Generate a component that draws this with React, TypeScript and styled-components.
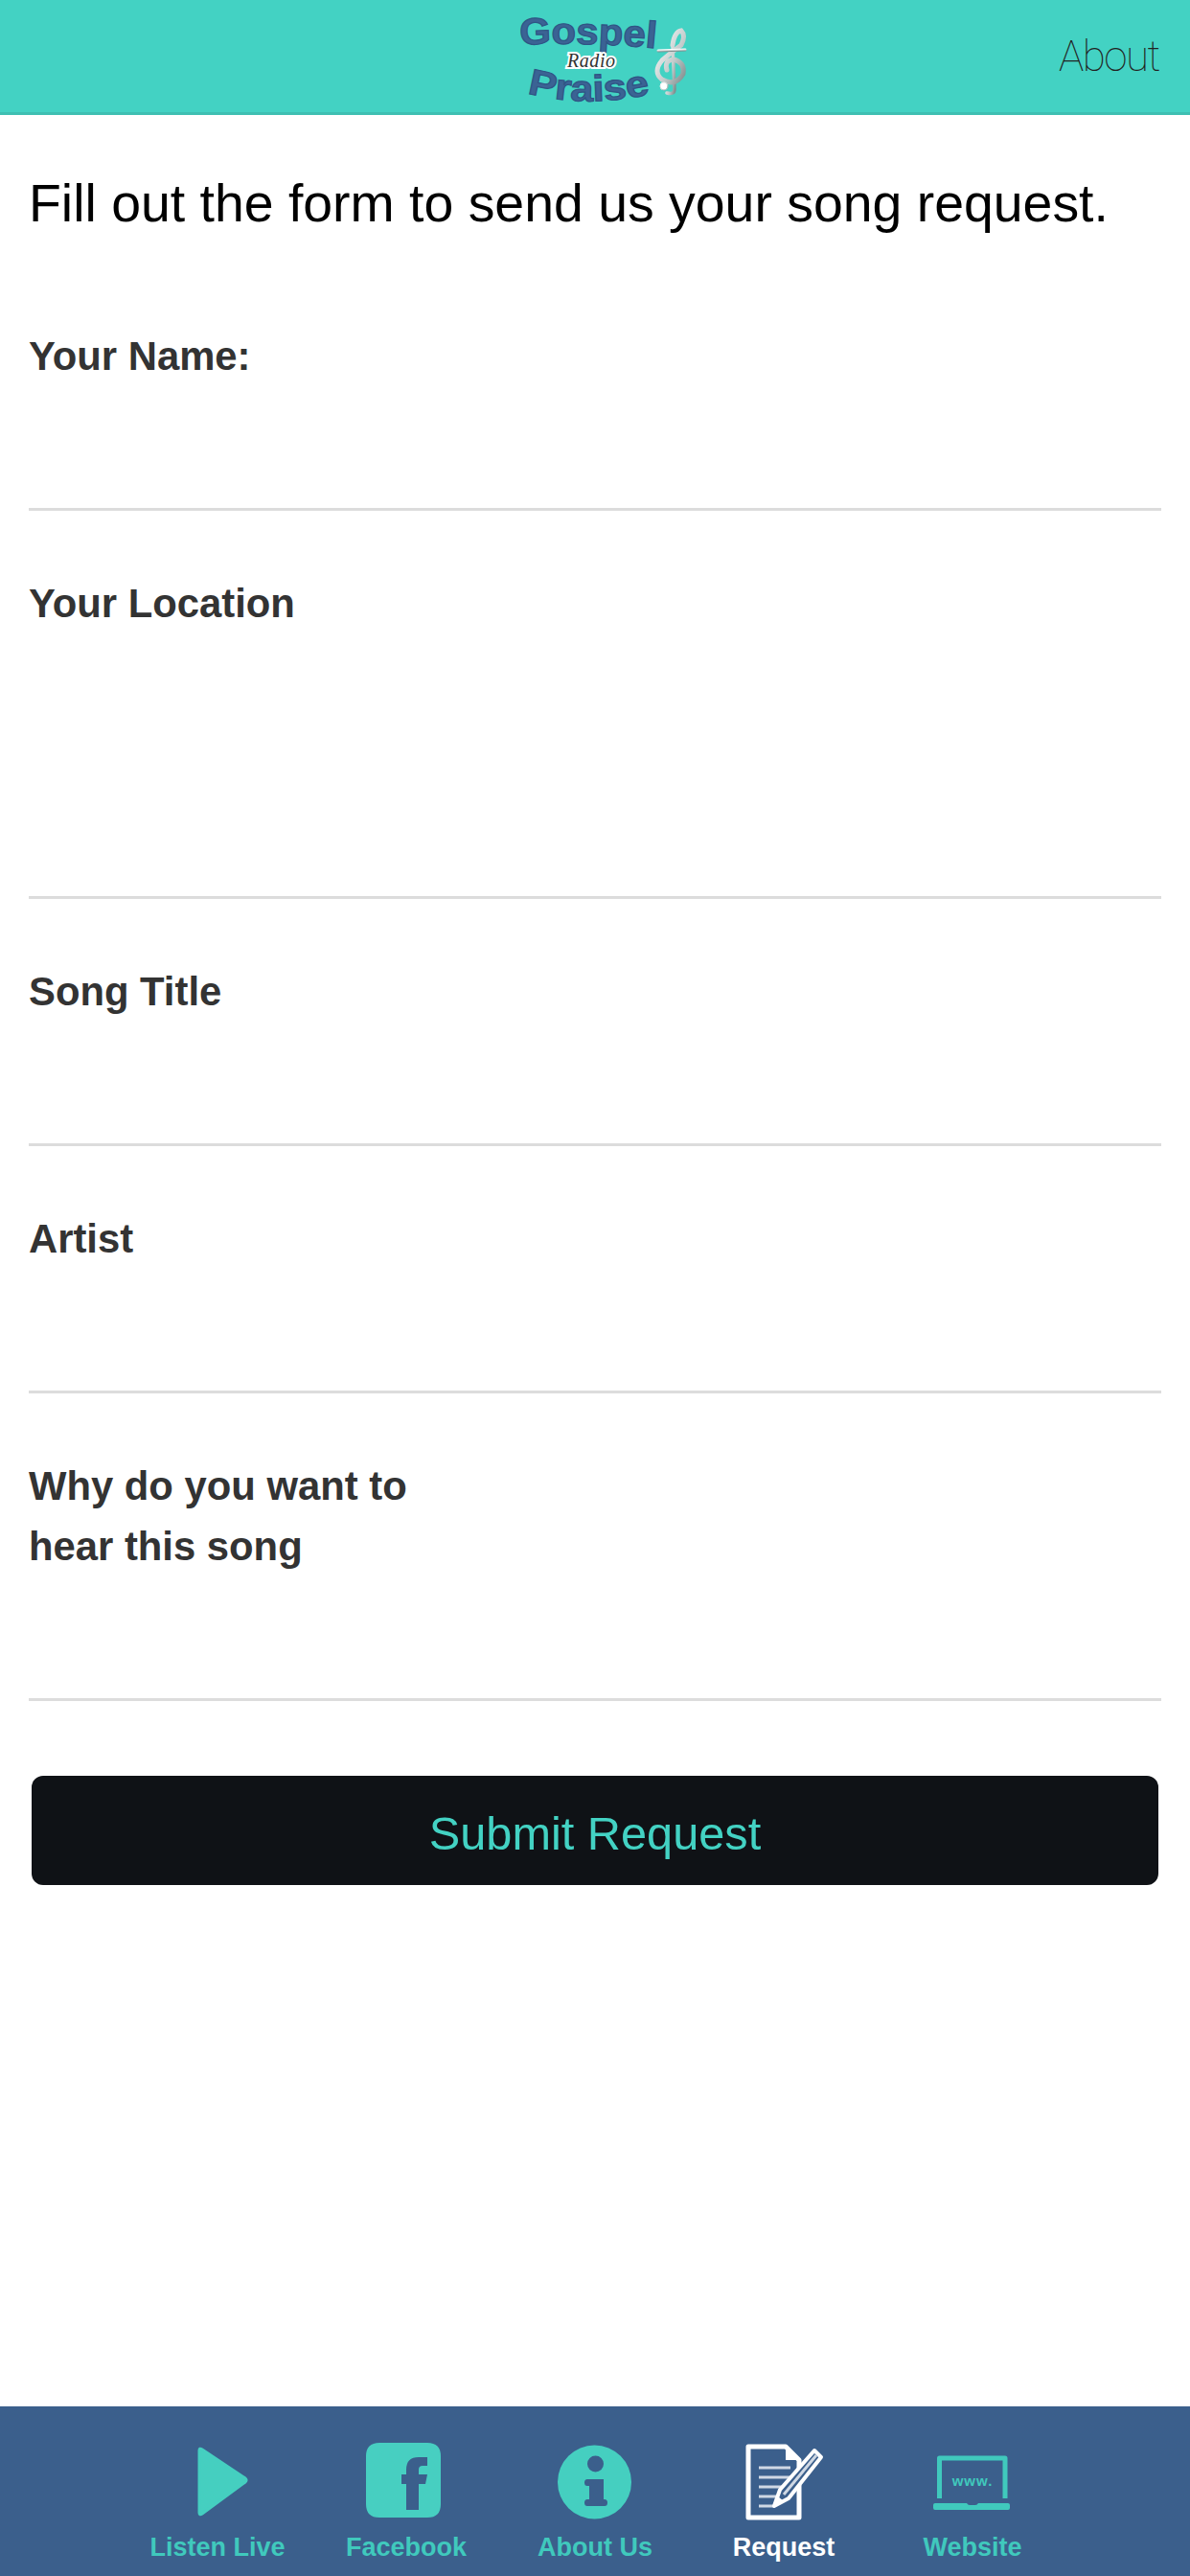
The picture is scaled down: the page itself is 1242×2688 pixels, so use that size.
import { FC, ReactNode } from 'react'
import styled, { createGlobalStyle } from 'styled-components'

const GlobalStyle = createGlobalStyle`
  html, body {
    margin: 0;
    padding: 0;
    background: #fff;
    font-family: 'Liberation Sans', Arial, sans-serif;
  }
  * {
    box-sizing: border-box;
  }
`

const Page = styled.div`
  display: flex;
  flex-direction: column;
  width: 1242px;
  height: 2688px;
  overflow: hidden;
  background: #fff;
`

const TopBar = styled.header`
  display: grid;
  grid-template-columns: 1fr auto 1fr;
  align-items: center;
  height: 120px;
  flex: none;
  padding: 0 32px;
  background: #43d2c3;
  border-bottom: 3px solid #3fbfb2;
`

const LogoSlot = styled.div`
  grid-column: 2;
  display: flex;
`

const AboutLink = styled.a`
  grid-column: 3;
  justify-self: end;
  font-family: 'Roboto', 'Liberation Sans', sans-serif;
  font-weight: 100;
  font-size: 44px;
  letter-spacing: -1.5px;
  color: #222;
`

const Content = styled.main`
  flex: 1;
  padding: 0 30px;
`

const Intro = styled.h1`
  margin: 0;
  height: 155px;
  padding-top: 61px;
  font-weight: 400;
  font-size: 55.4px;
  line-height: 62px;
  color: #000;
  white-space: nowrap;
`

const Field = styled.div`
  display: flex;
  flex-direction: column;
  padding-top: 65px;
  border-bottom: 3px solid #dcdcdc;
`

const FieldLabel = styled.label<{ $width?: number }>`
  font-weight: 700;
  font-size: 41.8px;
  line-height: 63px;
  color: #333;
  max-width: ${(p) => p.$width ?? 1182}px;
`

const TextInput = styled.input`
  height: 127px;
  border: 0;
  outline: 0;
  background: transparent;
`

const TextArea = styled.textarea`
  height: 274px;
  border: 0;
  outline: 0;
  resize: none;
  background: transparent;
`

const SubmitButton = styled.button`
  display: block;
  width: 1176px;
  height: 114px;
  margin: 78px 3px 0;
  padding: 6px 0 0;
  border: 0;
  border-radius: 12px;
  background: #0f1216;
  color: #43d2c3;
  font-family: inherit;
  font-size: 48.7px;
`

const TabBar = styled.nav`
  display: flex;
  justify-content: center;
  height: 177px;
  flex: none;
  padding-top: 38px;
  background: #3b5f8c;
`

const Tab = styled.a<{ $active?: boolean }>`
  display: flex;
  flex-direction: column;
  align-items: center;
  width: 197px;
  color: ${(p) => (p.$active ? '#fff' : '#40c9bd')};
  font-weight: 700;
  font-size: 27px;
  line-height: 32px;
`

const TabIcon = styled.svg`
  display: block;
  width: 100px;
  height: 80px;
  margin-bottom: 13px;
  overflow: visible;
`

const Logo: FC = () => (
  <svg width="200" height="100" viewBox="0 0 200 100">
    <defs>
      <path id="gospelArc" d="M22 38 Q 90 34 170 42" />
      <path id="praiseArc" d="M29 88 Q 94 106 170 86" />
      <linearGradient id="clefFill" x1="0" y1="0" x2="1" y2="1">
        <stop offset="0" stopColor="#ffffff" />
        <stop offset="0.6" stopColor="#c4cccc" />
        <stop offset="1" stopColor="#7f8f8f" />
      </linearGradient>
    </defs>
    <text fontFamily="Liberation Sans" fontWeight="700" fontSize="39" fill="#3b6394" stroke="#2f5585" strokeWidth="1.2">
      <textPath href="#gospelArc" textLength="142" lengthAdjust="spacingAndGlyphs">Gospel</textPath>
    </text>
    <text
      x="96"
      y="61"
      textAnchor="middle"
      fontFamily="Liberation Serif"
      fontStyle="italic"
      fontSize="20"
      textLength="50"
      fill="#333"
      stroke="#fff"
      strokeWidth="4"
      paintOrder="stroke"
    >
      Radio
    </text>
    <text fontFamily="Liberation Sans" fontWeight="700" fontSize="38" fill="#3b6394" stroke="#2f5585" strokeWidth="1.2">
      <textPath href="#praiseArc" textLength="130" lengthAdjust="spacingAndGlyphs">Praise</textPath>
    </text>
    <g fill="none" stroke="url(#clefFill)" strokeLinecap="round">
      <path strokeWidth="3.5" d="M181 38 L183 84 Q183 90 175 88" />
      <path strokeWidth="5" d="M181 38 Q183 24 190 23 Q195 28 190 38 Q178 47 170 54 Q160 66 170 74 Q184 82 192 68 Q194 56 182 53 Q172 54 175 64" />
      <path strokeWidth="3" d="M166 44 L194 43" />
      <circle cx="172" cy="81" r="4" fill="#fff" strokeWidth="1" />
    </g>
  </svg>
)

const PlayIcon: FC = () => (
  <path
    d="M31 8 Q31 5 34 7 L79 37 Q81 39 79 41 L34 74 Q31 76 31 73 Z"
    fill="#45cfc0"
    stroke="#45cfc0"
    strokeWidth="3"
    strokeLinejoin="round"
  />
)

const FacebookIcon: FC = () => (
  <path
    fillRule="evenodd"
    fill="#47cfc1"
    d="M22 0 H72 Q86 0 86 14 V64 Q86 78 72 78 H22 Q8 78 8 64 V14 Q8 0 22 0 Z M50 70 H63 V43 H70 L72 33 H63 V28 Q63 24 67 24 H72 V15 H63 Q50 15 50 28 V33 H45 V43 H50 Z"
  />
)

const InfoIcon: FC = () => (
  <path
    fillRule="evenodd"
    fill="#45cfc0"
    d="M49.5 2.5 A38.5 38.5 0 1 0 49.5 79.5 A38.5 38.5 0 1 0 49.5 2.5 Z M50.5 13.5 A8.5 8.5 0 1 1 50.5 30.5 A8.5 8.5 0 1 1 50.5 13.5 Z M42 38 H59 V59 H60 Q63 59 63 62.5 Q63 66 60 66 H42 Q39 66 39 62.5 Q39 59 42 59 H44 V45 H42 Q39 45 39 41.5 Q39 38 42 38 Z"
  />
)

const RequestIcon: FC = () => (
  <g>
    <path
      d="M66 44 V78 H13 V4 H52 L66 18 V30"
      fill="none"
      stroke="#fff"
      strokeWidth="5"
      strokeLinejoin="round"
    />
    <path d="M52 4 V18 H66 Z" fill="#fff" />
    <g stroke="#cfd8e4" strokeWidth="3">
      <path d="M24 26 H57" />
      <path d="M24 36 H58" />
      <path d="M24 46 H52" />
      <path d="M24 56 H47" />
      <path d="M24 66 H40" />
    </g>
    <path d="M82 8 L89 15 L55 58 L40 66 L46 49 Z" fill="#3b5f8c" stroke="#fff" strokeWidth="4" strokeLinejoin="round" />
    <path d="M84 13 L50 54" stroke="#cfd8e4" strokeWidth="3" />
    <path d="M40 66 L44 56 L50 61 Z" fill="#fff" />
  </g>
)

const WebsiteIcon: FC = () => (
  <g>
    <path d="M15.5 58 V16 H84 V58" fill="none" stroke="#40c9bd" strokeWidth="5" strokeLinejoin="round" />
    <path
      d="M11 63 H44 Q45 65 47 65 H53 Q55 65 56 63 H87 Q89 63 89 65 V68 Q89 70 87 70 H11 Q9 70 9 68 V65 Q9 63 11 63 Z"
      fill="#40c9bd"
    />
    <text
      x="50"
      y="45"
      textAnchor="middle"
      fontFamily="Liberation Sans"
      fontSize="15"
      letterSpacing="1"
      fill="#40c9bd"
    >
      www.
    </text>
  </g>
)

const tabs: { label: string; icon: ReactNode; active?: boolean }[] = [
  { label: 'Listen Live', icon: <PlayIcon /> },
  { label: 'Facebook', icon: <FacebookIcon /> },
  { label: 'About Us', icon: <InfoIcon /> },
  { label: 'Request', icon: <RequestIcon />, active: true },
  { label: 'Website', icon: <WebsiteIcon /> },
]

export default function App() {
  return (
    <Page>
      <GlobalStyle />
      <TopBar>
        <LogoSlot>
          <Logo />
        </LogoSlot>
        <AboutLink>About</AboutLink>
      </TopBar>
      <Content>
        <Intro>Fill out the form to send us your song request.</Intro>
        <Field>
          <FieldLabel>Your Name:</FieldLabel>
          <TextInput />
        </Field>
        <Field>
          <FieldLabel>Your Location</FieldLabel>
          <TextArea />
        </Field>
        <Field>
          <FieldLabel>Song Title</FieldLabel>
          <TextInput />
        </Field>
        <Field>
          <FieldLabel>Artist</FieldLabel>
          <TextInput />
        </Field>
        <Field>
          <FieldLabel $width={450}>Why do you want to hear this song</FieldLabel>
          <TextInput />
        </Field>
        <SubmitButton>Submit Request</SubmitButton>
      </Content>
      <TabBar>
        {tabs.map((t) => (
          <Tab key={t.label} $active={t.active}>
            <TabIcon viewBox="0 0 100 80">{t.icon}</TabIcon>
            {t.label}
          </Tab>
        ))}
      </TabBar>
    </Page>
  )
}
